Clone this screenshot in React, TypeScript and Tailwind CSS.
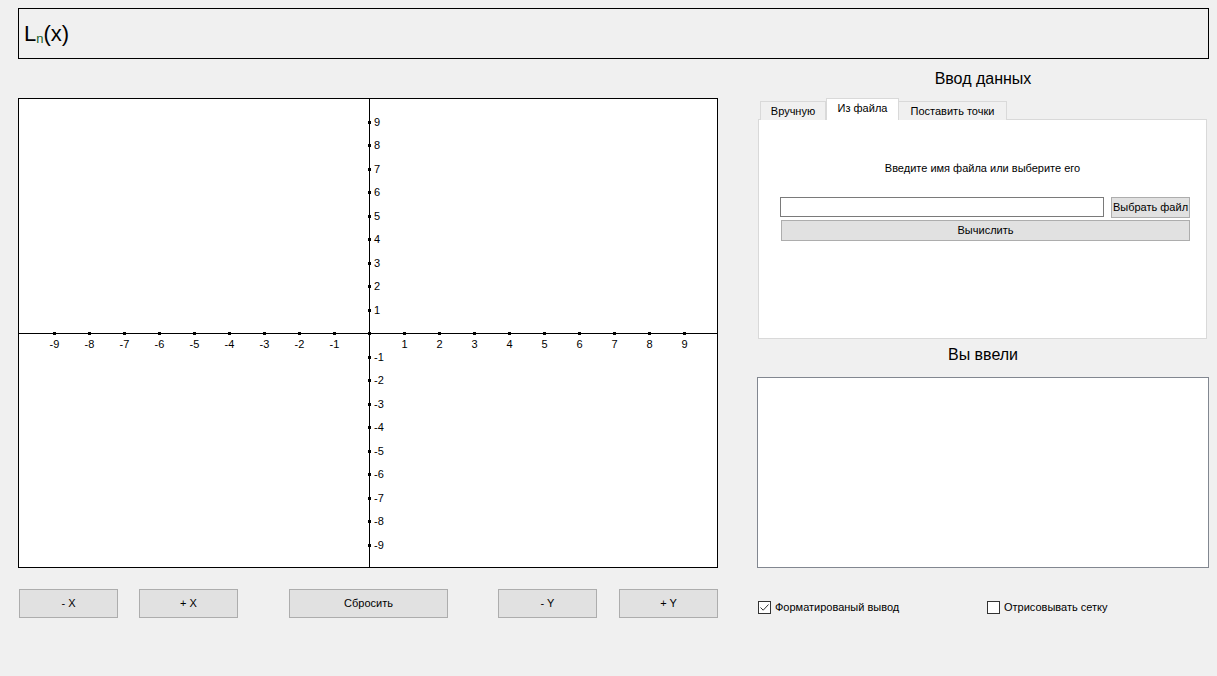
import React from 'react';

const ticks = [-9, -8, -7, -6, -5, -4, -3, -2, -1, 1, 2, 3, 4, 5, 6, 7, 8, 9];

// axis origin inside the svg (svg sits inside the 1px border)
const OX = 350;
const OY = 234;
const STEP_X = 35;
const STEP_Y = 23.5;

function Chart() {
  return (
    <div className="w-[700px] h-[470px] border border-black bg-white">
      <svg width={698} height={468} className="block" fontFamily="'Liberation Sans', Arial, sans-serif" fontSize={11}>
        <line x1={0} y1={OY + 0.5} x2={698} y2={OY + 0.5} stroke="#000" strokeWidth={1} />
        <line x1={OX + 0.5} y1={0} x2={OX + 0.5} y2={468} stroke="#000" strokeWidth={1} />
        <rect x={OX - 1} y={OY - 1} width={3} height={3} fill="#000" />
        {ticks.map((i) => {
          const cx = OX + i * STEP_X;
          return (
            <g key={'x' + i}>
              <rect x={cx - 1} y={OY - 1} width={3} height={3} fill="#000" />
              <text x={cx + 0.5} y={OY + 15} textAnchor="middle" fill="#000">
                {i}
              </text>
            </g>
          );
        })}
        {ticks.map((i) => {
          const cy = Math.round(OY - i * STEP_Y);
          return (
            <g key={'y' + i}>
              <rect x={OX - 1} y={cy - 1} width={3} height={3} fill="#000" />
              <text x={OX + 5} y={cy + 4} fill="#000">
                {i}
              </text>
            </g>
          );
        })}
      </svg>
    </div>
  );
}

function Btn({ className, children }: { className: string; children: React.ReactNode }) {
  return (
    <button className={`bg-[#e1e1e1] border border-[#adadad] text-[11px] text-black flex items-center justify-center ${className}`}>
      {children}
    </button>
  );
}

function Check({ checked, label, className }: { checked: boolean; label: string; className?: string }) {
  return (
    <label className={`flex items-center gap-[4px] text-[11px] text-black ${className ?? ''}`}>
      <span className="w-[13px] h-[13px] border border-[#333] bg-white flex items-center justify-center">
        {checked && (
          <svg width={11} height={11} viewBox="0 0 11 11">
            <path d="M1.5 5.5 L4.2 8.2 L9.5 2.5" fill="none" stroke="#333" strokeWidth={1} />
          </svg>
        )}
      </span>
      {label}
    </label>
  );
}

export default function App() {
  return (
    <div className="w-[1217px] h-[676px] bg-[#f0f0f0] pt-[8px] pl-[18px] font-['Liberation_Sans',Arial,sans-serif] text-black overflow-hidden">
      {/* Title */}
      <div className="w-[1191px] h-[51px] border border-black flex items-center pl-[5px]">
        <span className="text-[22px] leading-none">L</span>
        <span className="text-[13px] leading-none text-[#17602a] mt-[9px]">n</span>
        <span className="text-[22px] leading-none">(x)</span>
      </div>

      <div className="flex gap-[39px]">
        {/* Left: chart + controls */}
        <div className="w-[700px] pt-[39px]">
          <Chart />
          <div className="flex mt-[21px] pl-[1px]">
            <Btn className="w-[99px] h-[29px]">- X</Btn>
            <Btn className="w-[99px] h-[29px] ml-[21px]">+ X</Btn>
            <Btn className="w-[159px] h-[29px] ml-[51px]">Сбросить</Btn>
            <Btn className="w-[99px] h-[29px] ml-[50px]">- Y</Btn>
            <Btn className="w-[99px] h-[29px] ml-[22px]">+ Y</Btn>
          </div>
        </div>

        {/* Right: data input */}
        <div className="w-[452px]">
          <div className="mt-[10px] h-[20px] leading-[20px] text-[16px] text-center">Ввод данных</div>

          <div className="ml-[1px] mt-[9px] w-[449px]">
            <div className="flex items-end pl-[2px] relative z-10 -mb-[1px] text-[11px]">
              <div className="w-[66px] h-[19px] border border-b-0 border-[#d9d9d9] bg-[#f0f0f0] flex items-center justify-center">Вручную</div>
              <div className="w-[73px] h-[22px] border border-b-0 border-[#d9d9d9] bg-white flex items-center justify-center pb-[2px]">Из файла</div>
              <div className="w-[108px] h-[19px] border border-b-0 border-l-0 border-[#d9d9d9] bg-[#f0f0f0] flex items-center justify-center">Поставить точки</div>
            </div>
            <div className="h-[220px] border border-[#d9d9d9] bg-white">
              <div className="pt-[42px] h-[55px] leading-[13px] text-[11px] text-center">Введите имя файла или выберите его</div>
              <div className="flex mt-[22px] ml-[21px]">
                <div className="w-[324px] h-[20px] border border-[#7a7a7a] bg-white" />
                <Btn className="w-[79px] h-[21px] ml-[7px]">Выбрать файл</Btn>
              </div>
              <Btn className="w-[409px] h-[21px] ml-[22px] mt-[2px]">Вычислить</Btn>
            </div>
          </div>

          <div className="mt-[6px] h-[20px] leading-[20px] text-[16px] text-center">Вы ввели</div>
          <div className="mt-[12px] w-[452px] h-[191px] border border-[#828790] bg-white" />

          <div className="flex mt-[31px] ml-[1px]">
            <Check checked label="Форматированый вывод" className="w-[229px]" />
            <Check checked={false} label="Отрисовывать сетку" />
          </div>
        </div>
      </div>
    </div>
  );
}
